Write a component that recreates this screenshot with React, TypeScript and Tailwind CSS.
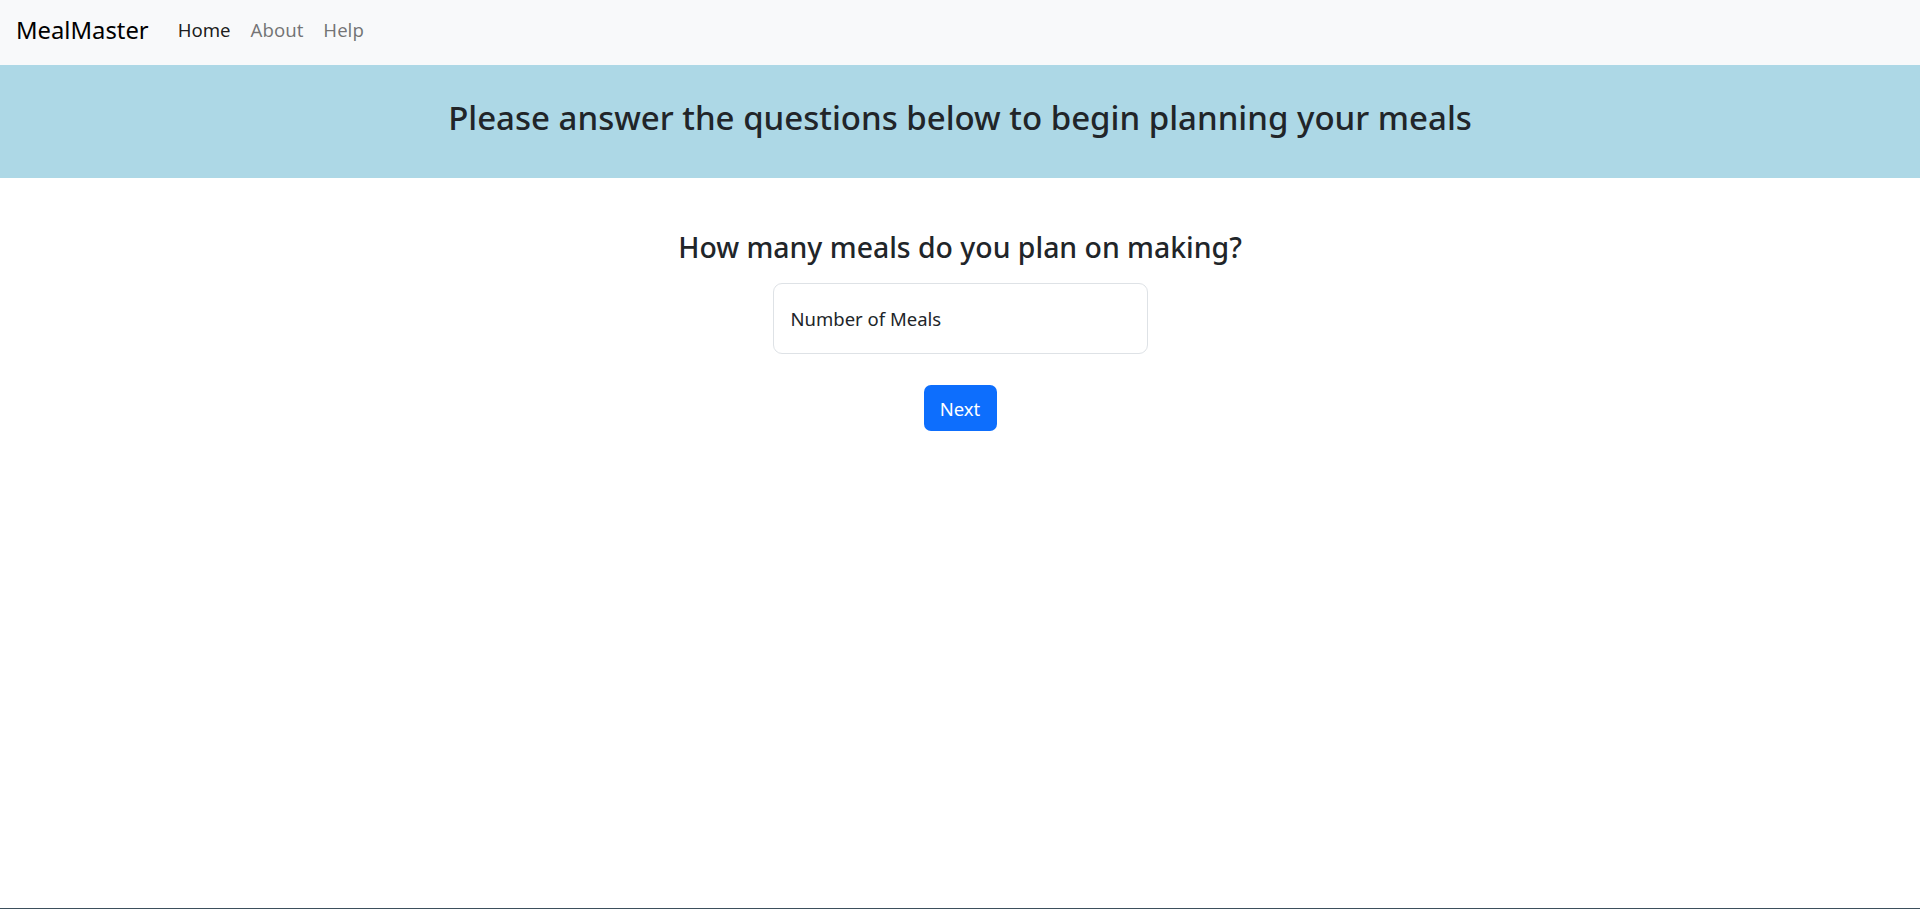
import { useState } from 'react'

const App = () => {
  const [meals, setMeals] = useState('')

  return (
    <div className="h-[909px] flex flex-col bg-white border-b border-[#3d4f5c] font-['Noto_Sans',sans-serif] text-[#212529]">
      {/* Navbar */}
      <nav className="h-[65px] shrink-0 bg-[#f8f9fa] flex items-center px-[16px] pb-[4px]">
        <a href="#" className="text-[23.8px] text-black mr-[29px] leading-none">
          MealMaster
        </a>
        <div className="flex items-center gap-[20px] text-[18.6px] leading-none">
          <a href="#" className="text-black/90">Home</a>
          <a href="#" className="text-black/55">About</a>
          <a href="#" className="text-black/55">Help</a>
        </div>
      </nav>

      {/* Banner */}
      <header className="h-[113px] shrink-0 bg-[#add8e6] flex items-center justify-center pb-[8px]">
        <h2 className="text-[33px] font-medium leading-none">
          Please answer the questions below to begin planning your meals
        </h2>
      </header>

      {/* Question */}
      <main className="flex flex-col items-center pt-[55px]">
        <h3 className="text-[28.4px] font-medium leading-none mb-[22px]">
          How many meals do you plan on making?
        </h3>
        <input
          type="number"
          value={meals}
          onChange={(e) => setMeals(e.target.value)}
          placeholder="Number of Meals"
          className="w-[375px] h-[71px] border border-[#dee2e6] rounded-[9px] px-[17px] text-[18.5px] text-[#212529] placeholder:text-[#212529] outline-none"
        />
        <button className="mt-[31px] w-[73px] h-[46px] rounded-[7px] bg-[#0d6efd] text-white text-[18.5px]">
          Next
        </button>
      </main>
    </div>
  )
}

export default App
